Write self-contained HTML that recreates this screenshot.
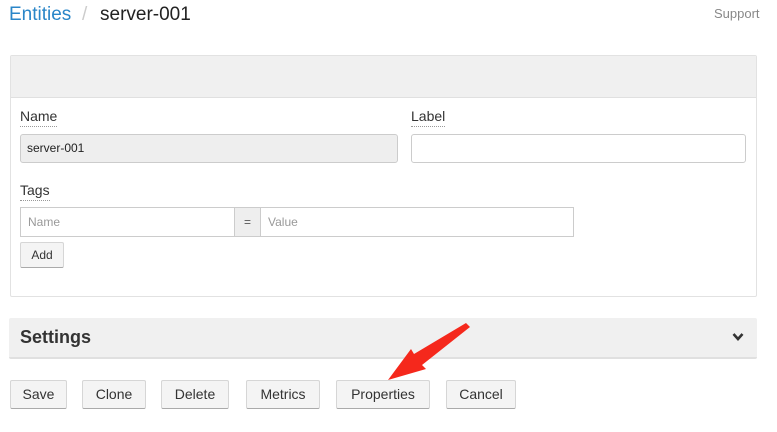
<!DOCTYPE html>
<html><head><style>
*{box-sizing:border-box;margin:0;padding:0}
body{width:777px;height:432px;background:#fff;font-family:"Liberation Sans",sans-serif;position:relative;overflow:hidden;color:#222}
.a{position:absolute}
.lbl{font-size:14px;color:#333;border-bottom:1px dotted #999;padding-bottom:2px}
.btn{position:absolute;top:380px;height:29px;background:#f4f4f4;border:1px solid #d6d6d6;border-bottom-color:#aaa;border-radius:2px;font-size:14px;color:#333;text-align:center;line-height:27px}
input{position:absolute}
</style></head><body>
<div class="a" style="left:9px;top:4px;font-size:19px;color:#2a86c8">Entities</div>
<div class="a" style="left:82px;top:4px;font-size:19px;color:#ccc">/</div>
<div class="a" style="left:100px;top:4px;font-size:19px;color:#222">server-001</div>
<div class="a" style="left:714px;top:6px;font-size:13px;color:#888">Support</div>

<div class="a" style="left:10px;top:55px;width:747px;height:242px;border:1px solid #e2e2e2;border-radius:2px">
 <div style="height:42px;background:#f0f0f0;border-bottom:1px solid #e0e0e0"></div>
</div>
<div class="a lbl" style="left:20px;top:108px">Name</div>
<div class="a" style="left:20px;top:134px;width:378px;height:29px;background:#eee;border:1px solid #ccc;border-radius:3px;font-size:12px;line-height:27px;padding-left:6px;color:#222">server-001</div>
<div class="a lbl" style="left:411px;top:108px">Label</div>
<div class="a" style="left:411px;top:134px;width:335px;height:29px;background:#fff;border:1px solid #ccc;border-radius:3px"></div>
<div class="a lbl" style="left:20px;top:182px">Tags</div>
<div class="a" style="left:20px;top:207px;width:554px;height:30px;border:1px solid #ccc;font-size:12px;color:#999;line-height:28px">
 <span class="a" style="left:7px">Name</span>
 <div class="a" style="left:213px;top:0;width:27px;height:28px;background:#eee;border-left:1px solid #ccc;border-right:1px solid #ccc;text-align:center;color:#555">=</div>
 <span class="a" style="left:247px">Value</span>
</div>
<div class="a" style="left:20px;top:242px;width:44px;height:26px;background:#f4f4f4;border:1px solid #d6d6d6;border-bottom-color:#aaa;border-radius:2px;font-size:12px;text-align:center;line-height:24px;color:#333">Add</div>

<div class="a" style="left:9px;top:318px;width:748px;height:41px;background:#f0f0f0;border-bottom:2px solid #e0e0e0;border-radius:2px"></div>
<div class="a" style="left:20px;top:327px;font-size:18px;font-weight:bold;color:#333">Settings</div>
<svg class="a" style="left:732px;top:332px" width="12" height="10" viewBox="0 0 12 10"><path d="M1.5 2 L6 7 L10.5 2" stroke="#333" stroke-width="2.6" fill="none"/></svg>

<div class="btn" style="left:10px;width:57px">Save</div>
<div class="btn" style="left:82px;width:64px">Clone</div>
<div class="btn" style="left:161px;width:68px">Delete</div>
<div class="btn" style="left:246px;width:74px">Metrics</div>
<div class="btn" style="left:336px;width:94px">Properties</div>
<div class="btn" style="left:446px;width:70px">Cancel</div>

<svg class="a" style="left:380px;top:320px" width="100" height="65" viewBox="380 320 100 65"><path d="M470 327 L422 365 L426 369 L388 380 L411 349 L414 354 L466 323 Z" fill="#f5281c"/></svg>
</body></html>
